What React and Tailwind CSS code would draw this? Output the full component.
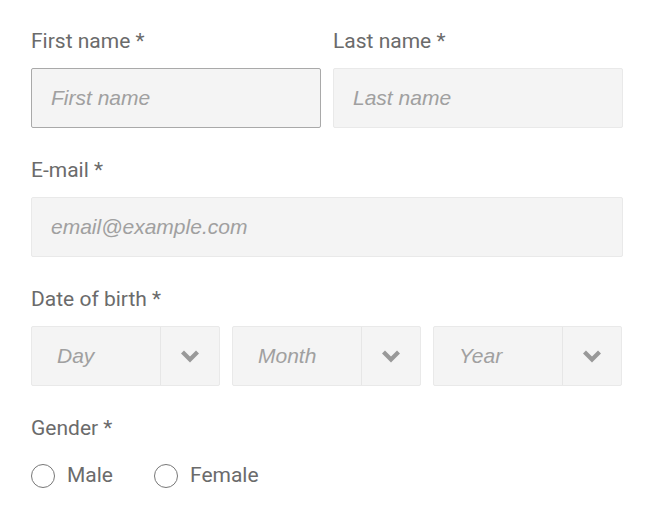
export default function App() {
  const font = { fontFamily: 'Roboto, "Liberation Sans", sans-serif' };
  const ph = { fontFamily: '"Liberation Sans", Arial, sans-serif' };

  const Chevron = () => (
    <svg width="20" height="14" viewBox="0 0 20 14" className="block">
      <polyline points="2.5,3 10,10.5 17.5,3" fill="none" stroke="#999999" strokeWidth="4.2" strokeLinejoin="miter" />
    </svg>
  );

  const Select = ({ label }) => (
    <div className="flex h-[60px] rounded-[2px] border border-[#e9e9e9] bg-[#f4f4f4]">
      <div className="flex flex-1 items-center pl-[25px] text-[21px] italic text-[#a0a0a0]" style={ph}>{label}</div>
      <div className="flex w-[59px] items-center justify-center border-l border-[#e6e6e6]">
        <Chevron />
      </div>
    </div>
  );

  const inputCls =
    'h-[60px] w-full rounded-[2px] border bg-[#f4f4f4] px-[19px] text-[21px] italic outline-none placeholder:text-[#a0a0a0]';

  return (
    <div className="min-h-[518px] w-[659px] bg-white pl-[31px] pt-[29px] text-[#6b6b6b]" style={font}>
      <div className="w-[592px]">
        <div className="grid grid-cols-2 gap-x-[12px]">
          <div>
            <div className="mb-[15px] h-6 text-[21px] leading-6">First name *</div>
            <input placeholder="First name" style={ph} className={inputCls + ' border-[#a9a9a9]'} />
          </div>
          <div>
            <div className="mb-[15px] h-6 text-[21px] leading-6">Last name *</div>
            <input placeholder="Last name" style={ph} className={inputCls + ' border-[#e9e9e9]'} />
          </div>
        </div>

        <div className="mt-[30px]">
          <div className="mb-[15px] h-6 text-[21px] leading-6">E-mail *</div>
          <input placeholder="email@example.com" style={ph} className={inputCls + ' border-[#e9e9e9]'} />
        </div>

        <div className="mt-[30px]">
          <div className="mb-[15px] h-6 text-[21px] leading-6">Date of birth *</div>
          <div className="grid w-[591px] grid-cols-3 gap-x-[12px]">
            <Select label="Day" />
            <Select label="Month" />
            <Select label="Year" />
          </div>
        </div>

        <div className="mt-[30px]">
          <div className="mb-[20px] h-6 text-[21px] leading-6">Gender *</div>
          <div className="flex items-center text-[21px]">
            <label className="flex items-center gap-[12px]">
              <span className="h-[24px] w-[24px] rounded-full border border-[#777] bg-white" />
              <span>Male</span>
            </label>
            <label className="ml-[41px] flex items-center gap-[12px]">
              <span className="h-[24px] w-[24px] rounded-full border border-[#777] bg-white" />
              <span>Female</span>
            </label>
          </div>
        </div>
      </div>
    </div>
  );
}
